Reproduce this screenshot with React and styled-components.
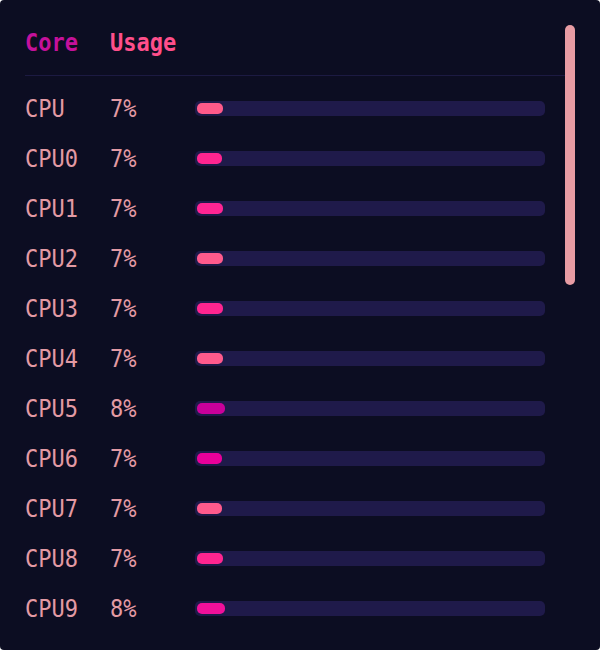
import React from 'react';
import styled, { createGlobalStyle } from 'styled-components';

const GlobalStyle = createGlobalStyle`
  html, body {
    margin: 0;
    padding: 0;
    background: #ffffff;
  }
`;

const Panel = styled.div`
  width: 600px;
  height: 650px;
  box-sizing: border-box;
  padding: 25px;
  display: flex;
  background-color: #0c0d22;
  border-radius: 4px;
  font-family: "DejaVu Sans Mono", "Liberation Mono", monospace;
`;

const Viewport = styled.div`
  flex: 1;
  height: 600px;
  overflow: hidden;
`;

const ScrollTrack = styled.div`
  width: 10px;
  height: 600px;
  display: flex;
  flex-direction: column;
`;

const Thumb = styled.div`
  height: 260px;
  border-radius: 5px;
  background-color: #e89ca4;
`;

const Header = styled.div`
  display: grid;
  grid-template-columns: 85px 85px 1fr;
  align-items: center;
  height: 34px;
  padding-bottom: 16px;
  border-bottom: 1px solid #1c1a42;
`;

const HeadCell = styled.span`
  font-size: 22px;
  font-weight: bold;
  color: ${p => p.color};
  display: inline-block;
  transform: scaleY(1.12);
`;

const Rows = styled.div`
  display: flex;
  flex-direction: column;
  padding-top: 7px;
`;

const Row = styled.div`
  display: grid;
  grid-template-columns: 85px 85px 350px;
  align-items: center;
  height: 50px;
`;

const Cell = styled.span`
  font-size: 22px;
  color: #e39aa4;
  display: inline-block;
  transform: scaleY(1.15);
  transform-origin: left center;
`;

const Track = styled.div`
  height: 15px;
  box-sizing: border-box;
  padding: 2px;
  background-color: #1f1a4a;
  border-radius: 5px;
`;

const Fill = styled.div`
  height: 11px;
  border-radius: 5px;
  background-color: ${p => p.color};
`;

const cores = [
  ['CPU', 7.6, '#ff5a8a'],
  ['CPU0', 7.1, '#ff2590'],
  ['CPU1', 7.5, '#ff2593'],
  ['CPU2', 7.5, '#ff5a8c'],
  ['CPU3', 7.5, '#ff2590'],
  ['CPU4', 7.6, '#ff5a8c'],
  ['CPU5', 8.1, '#c8009a'],
  ['CPU6', 7.1, '#e8009a'],
  ['CPU7', 7.3, '#ff5a8c'],
  ['CPU8', 7.4, '#ff2590'],
  ['CPU9', 8.1, '#f0109a'],
];

export default function App() {
  return (
    <>
      <GlobalStyle />
      <Panel>
        <Viewport>
          <Header>
            <HeadCell color="#c5119b">Core</HeadCell>
            <HeadCell color="#ff4f8b">Usage</HeadCell>
            <span />
          </Header>
          <Rows>
            {cores.map(([name, pct, color]) => (
              <Row key={name}>
                <Cell>{name}</Cell>
                <Cell>{Math.floor(pct)}%</Cell>
                <Track>
                  <Fill color={color} style={{ width: `${pct}%` }} />
                </Track>
              </Row>
            ))}
          </Rows>
        </Viewport>
        <ScrollTrack>
          <Thumb />
        </ScrollTrack>
      </Panel>
    </>
  );
}
